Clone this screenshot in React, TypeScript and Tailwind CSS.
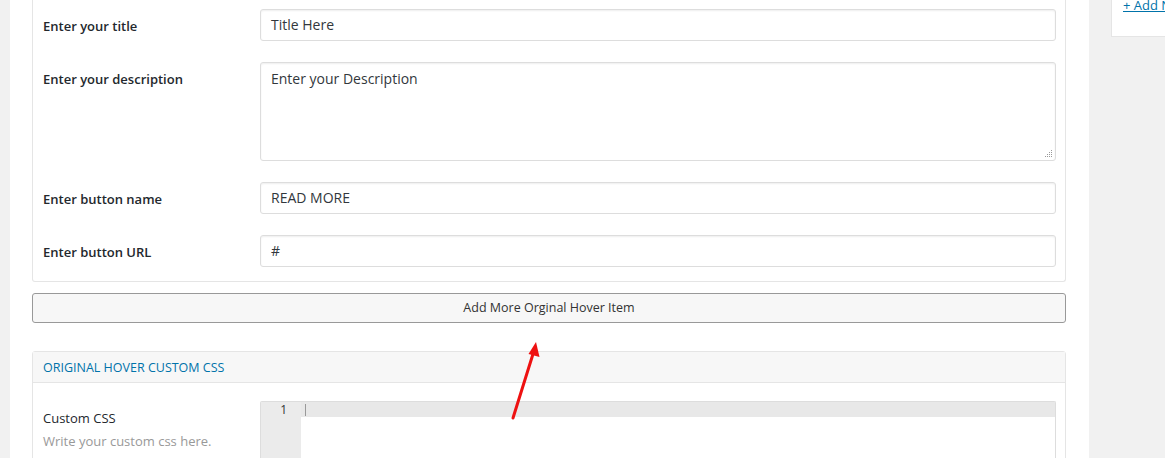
const font = { fontFamily: '"Open Sans", "Noto Sans", Arial, sans-serif' };

function FieldRow({ label, children }: { label: string; children: React.ReactNode }) {
  return (
    <div className="flex items-start">
      <label className="w-[217px] shrink-0 pt-[7px] text-[13px] leading-5 font-semibold text-[#23282d]">
        {label}
      </label>
      <div className="flex-1">{children}</div>
    </div>
  );
}

function TextInput({ value }: { value: string }) {
  return (
    <div className="h-8 rounded-[3px] border border-[#ddd] bg-white px-[10px] text-[14px] leading-[30px] text-[#32373c] shadow-[inset_0_1px_2px_rgba(0,0,0,0.07)]">
      {value}
    </div>
  );
}

export default function App() {
  return (
    <div className="flex h-[458px] overflow-hidden bg-[#f1f1f1]" style={font}>
      {/* left strip */}
      <div className="w-[10px] shrink-0" />

      {/* main panel */}
      <div className="relative w-[1079px] shrink-0 bg-white pl-[22px] pr-[23px]">
        {/* item card */}
        <div className="flex flex-col gap-[21px] rounded-b-[3px] border-x border-b border-[#e5e5e5] pt-[9px] pb-[14px] pl-[10px] pr-[9px]">
          <FieldRow label="Enter your title">
            <TextInput value="Title Here" />
          </FieldRow>
          <FieldRow label="Enter your description">
            <div className="relative h-[99px] rounded-[3px] border border-[#ddd] bg-white px-[10px] pt-[6px] text-[14px] leading-5 text-[#32373c] shadow-[inset_0_1px_2px_rgba(0,0,0,0.07)]">
              Enter your Description
              <svg className="absolute right-[2px] bottom-[2px]" width="8" height="8" viewBox="0 0 8 8">
                <g fill="#999">
                  <rect x="6" y="0" width="1" height="1" />
                  <rect x="4" y="2" width="1" height="1" />
                  <rect x="6" y="2" width="1" height="1" />
                  <rect x="2" y="4" width="1" height="1" />
                  <rect x="4" y="4" width="1" height="1" />
                  <rect x="6" y="4" width="1" height="1" />
                  <rect x="0" y="6" width="1" height="1" />
                  <rect x="2" y="6" width="1" height="1" />
                  <rect x="4" y="6" width="1" height="1" />
                  <rect x="6" y="6" width="1" height="1" />
                </g>
              </svg>
            </div>
          </FieldRow>
          <FieldRow label="Enter button name">
            <TextInput value="READ MORE" />
          </FieldRow>
          <FieldRow label="Enter button URL">
            <TextInput value="#" />
          </FieldRow>
        </div>

        {/* add more button */}
        <div className="mt-[11px] h-[30px] rounded-[3px] border border-[#999] bg-[#f7f7f7] text-center text-[12.5px] leading-[28px] text-[#333]">
          Add More Orginal Hover Item
        </div>

        {/* custom css card */}
        <div className="mt-[28px] rounded-t-[3px] border border-[#e5e5e5]">
          <div className="h-[31px] border-b border-[#e5e5e5] bg-[#f7f7f7] pl-[10px] text-[12.5px] leading-[31px] text-[#0073aa]">
            ORIGINAL HOVER CUSTOM CSS
          </div>
          <div className="flex items-start pt-[18px] pl-[10px] pr-[9px]">
            <div className="w-[217px] shrink-0 pt-[7px]">
              <div className="text-[13px] leading-5 font-medium text-[#23282d]">Custom CSS</div>
              <div className="mt-[3px] text-[13px] leading-5 text-[#999]">Write your custom css here.</div>
            </div>
            <div className="flex h-[80px] flex-1 rounded-t-[2px] border-x border-t border-[#ddd]">
              <div className="w-[40px] shrink-0 bg-[#ebebeb] pr-[14px] text-right text-[12px] leading-[15px] text-[#333]">
                1
              </div>
              <div className="flex-1">
                <div className="flex h-[15px] items-center bg-[#e8e8e8] pl-[4px]">
                  <div className="h-[12px] w-px bg-[#999]" />
                </div>
              </div>
            </div>
          </div>
        </div>

        {/* red annotation arrow */}
        <svg className="absolute top-[336px] left-[480px]" width="60" height="90" viewBox="0 0 60 90">
          <line x1="23" y1="82" x2="43" y2="18" stroke="#ee1111" strokeWidth="3" strokeLinecap="round" />
          <polygon points="46,6 49.5,21 38.5,18" fill="#ee1111" />
        </svg>
      </div>

      {/* right sidebar */}
      <div className="flex-1 overflow-hidden pl-[22px]">
        <div className="-mt-[5px] h-[42px] whitespace-nowrap border-l border-b border-[#e5e5e5] bg-white pl-[11px] text-[13px] leading-5 text-[#0073aa] underline">
          + Add New Category
        </div>
      </div>
    </div>
  );
}
